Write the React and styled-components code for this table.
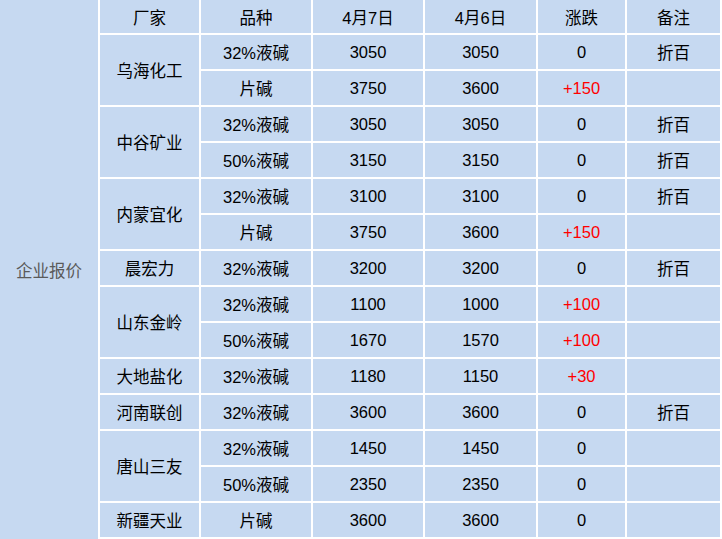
import styled, { createGlobalStyle } from 'styled-components'

const Global = createGlobalStyle`
	html, body {
		margin: 0;
		padding: 0;
		background: #ffffff;
	}
	body {
		font-family: "Liberation Sans", "Noto Sans CJK SC", sans-serif;
	}
`

const Table = styled.table`
	border-collapse: collapse;
	table-layout: fixed;
	width: 721px;
	background: #c6d9f1;
	font-size: 16.5px;
	color: #000;
`

const Row = styled.tr`
	height: ${p => (p.$head ? 34 : 36)}px;
`

const Cell = styled.td`
	border: 2px solid #ffffff;
	padding: 0;
	text-align: center;
	vertical-align: middle;
	white-space: nowrap;
	color: ${p => (p.$up ? '#ff0000' : 'inherit')};
	${p => p.$top && 'border-top: none;'}
`

const SideCell = styled(Cell)`
	border-left: none;
	border-top: none;
	border-bottom: none;
	color: #5a5a5a;
	padding-top: 1px;
`

const widths = [99, 101, 112, 112, 113, 89, 95]

const groups = [
	{ name: '乌海化工', rows: [['32%液碱', 3050, 3050, '0', '折百'], ['片碱', 3750, 3600, '+150', '']] },
	{ name: '中谷矿业', rows: [['32%液碱', 3050, 3050, '0', '折百'], ['50%液碱', 3150, 3150, '0', '折百']] },
	{ name: '内蒙宜化', rows: [['32%液碱', 3100, 3100, '0', '折百'], ['片碱', 3750, 3600, '+150', '']] },
	{ name: '晨宏力', rows: [['32%液碱', 3200, 3200, '0', '折百']] },
	{ name: '山东金岭', rows: [['32%液碱', 1100, 1000, '+100', ''], ['50%液碱', 1670, 1570, '+100', '']] },
	{ name: '大地盐化', rows: [['32%液碱', 1180, 1150, '+30', '']] },
	{ name: '河南联创', rows: [['32%液碱', 3600, 3600, '0', '折百']] },
	{ name: '唐山三友', rows: [['32%液碱', 1450, 1450, '0', ''], ['50%液碱', 2350, 2350, '0', '']] },
	{ name: '新疆天业', rows: [['片碱', 3600, 3600, '0', '']] },
]

const headers = ['厂家', '品种', '4月7日', '4月6日', '涨跌', '备注']

export default function App() {
	const total = groups.reduce((n, g) => n + g.rows.length, 0) + 1

	return (
		<>
			<Global />
			<Table>
				<colgroup>
					{widths.map((w, i) => <col key={i} style={{ width: w }} />)}
				</colgroup>
				<tbody>
					<Row $head>
						<SideCell rowSpan={total}>企业报价</SideCell>
						{headers.map(h => <Cell key={h} $top>{h}</Cell>)}
					</Row>
					{groups.map(g =>
						g.rows.map((r, i) => (
							<Row key={g.name + i}>
								{i === 0 && <Cell rowSpan={g.rows.length}>{g.name}</Cell>}
								<Cell>{r[0]}</Cell>
								<Cell>{r[1]}</Cell>
								<Cell>{r[2]}</Cell>
								<Cell $up={r[3].startsWith('+')}>{r[3]}</Cell>
								<Cell>{r[4]}</Cell>
							</Row>
						))
					)}
				</tbody>
			</Table>
		</>
	)
}
